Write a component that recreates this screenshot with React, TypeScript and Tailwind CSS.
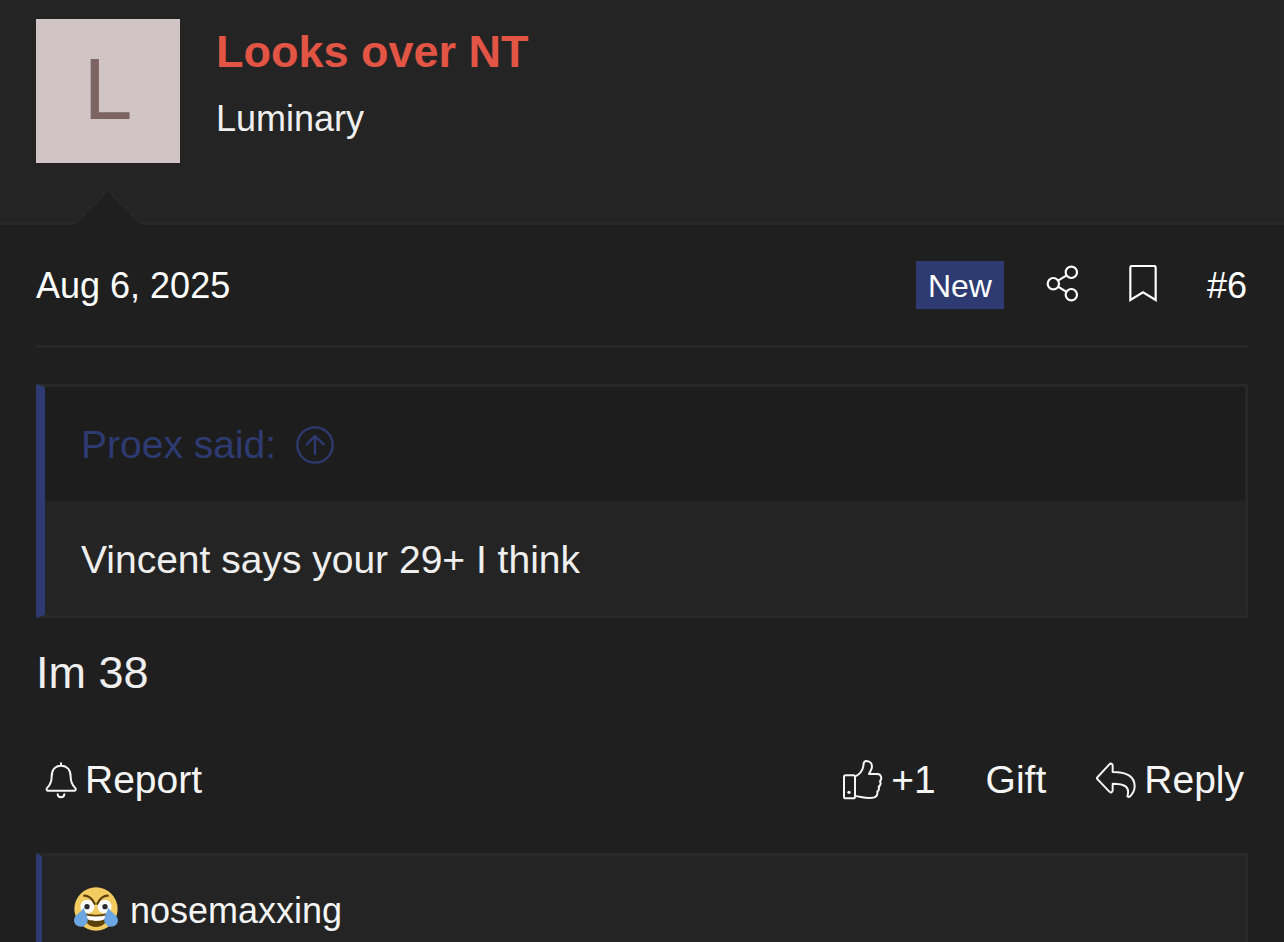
import React from "react";

function ShareIcon() {
  return (
    <svg viewBox="436 75 99 111" className="h-[37px] w-[33px]" fill="none" stroke="currentColor" strokeWidth="6.5" aria-hidden="true">
      <circle cx="458" cy="131" r="17" />
      <circle cx="512" cy="97" r="17" />
      <circle cx="512" cy="164" r="17" />
      <path d="M472 122 498 106M472 140 498 156" />
    </svg>
  );
}

function BookmarkIcon() {
  return (
    <svg viewBox="686 75 84 111" className="h-[37px] w-[28px]" fill="none" stroke="currentColor" strokeWidth="6.5" aria-hidden="true">
      <path d="M690 180V83q0-5 5-5h66q5 0 5 5v97l-38-23z" />
    </svg>
  );
}

function JumpIcon() {
  return (
    <svg viewBox="829 166 114 114" className="size-[38px]" fill="none" stroke="currentColor" strokeWidth="7" strokeLinecap="round" strokeLinejoin="round" aria-hidden="true">
      <circle cx="886" cy="223" r="53" />
      <path d="M886 250V197M861 221l25-25 26 25" />
    </svg>
  );
}

function BellIcon() {
  return (
    <svg viewBox="76 64 96 111" className="h-[37px] w-[32px]" fill="none" stroke="currentColor" strokeWidth="6" strokeLinecap="round" aria-hidden="true">
      <path d="M124 68v6M124 75C106 75 96 88 96 108c0 16-3 23-13 33-4 5-2 9 3 9h77c5 0 7-4 3-9-10-10-13-17-13-33 0-20-11-33-29-33zM114 161c2 12 18 12 20 0" />
    </svg>
  );
}

function ThumbIcon() {
  return (
    <svg viewBox="66 57 120 120" className="size-10" fill="none" stroke="currentColor" strokeWidth="6" strokeLinejoin="round" aria-hidden="true">
      <rect x="69" y="103" width="33" height="69" rx="5" />
      <circle cx="84" cy="154" r="5" fill="currentColor" stroke="none" />
      <path d="M102 107c10-5 22-16 25-31 0-12 3-16 9-16 9 0 17 6 17 17 0 8-7 16-9 22h25c12 0 15 15 8 21 3 7 1 14-4 17 2 6 0 12-4 15 1 6-1 12-5 15-4 4-12 4-18 4-20 0-26-4-44-6" />
    </svg>
  );
}

function ReplyIcon() {
  return (
    <svg viewBox="827 62 120 114" className="h-[38px] w-10" fill="none" stroke="currentColor" strokeWidth="6" strokeLinejoin="round" aria-hidden="true">
      <path d="M832 110 867 72c4-4 10-2 10 4v19c44 0 66 13 66 43 0 14-7 24-15 31-4 2-8 0-6-5 6-24-8-34-45-34v20c0 6-6 8-10 4l-35-37c-3-3-3-4 0-7z" />
    </svg>
  );
}

function LaughCryFace() {
  return (
    <svg viewBox="162 140 132 132" className="size-11" role="img" aria-label="Laughing">
      <circle cx="228" cy="206" r="65" fill="#f2cb61" />
      <circle cx="202" cy="199" r="21" fill="#fff" />
      <circle cx="254" cy="199" r="21" fill="#fff" />
      <circle cx="201" cy="199" r="8" fill="#2b2b30" />
      <circle cx="255" cy="199" r="8" fill="#2b2b30" />
      <path d="M193 166c15 0 24 10 31 24M263 166c-15 0-24 10-31 24" fill="none" stroke="#5f430e" strokeWidth="7" strokeLinecap="round" />
      <path d="M193 219q35 8 70 0c2 26-14 41-35 41s-37-15-35-41z" fill="#5a4108" />
      <path d="M196 225q32 7 64 0c-2 13-14 17-32 17s-30-4-32-17z" fill="#fff" />
      <path d="M191 203c5 14 12 24 12 36 0 12-9 20-20 20s-21-7-21-19c0-16 19-21 29-37zM265 203c-5 14-12 24-12 36 0 12 9 20 20 20s21-7 21-19c0-16-19-21-29-37z" fill="#6ba6e2" />
    </svg>
  );
}

export default function App() {
  return (
    <article className="flex min-h-screen flex-col bg-[#1f1f1f] font-['Liberation_Sans',Arial,sans-serif] text-[#f5f5f5]">
      <header className="relative flex gap-9 border-b-3 border-[#282828] bg-[#242424] px-9 pt-[19px] pb-[59px]">
        <a href="#profile" className="flex size-36 items-center justify-center bg-[#d0c4c4] pb-1 text-[88px] leading-none text-[#7e6363]">
          L
        </a>
        <div className="flex flex-col gap-[18px] pt-[6px]">
          <h1 className="text-[45px] leading-[54px] font-bold text-[#e25444]">
            <a href="#profile">Looks over NT</a>
          </h1>
          <p className="text-[36px] leading-[44px] text-[#efefef]">Luminary</p>
        </div>
        <svg viewBox="0 0 68 36" className="absolute -bottom-[3px] left-[74px] h-9 w-[68px]" aria-hidden="true">
          <path d="M0 36 34 2l34 34z" fill="#1f1f1f" />
          <path d="M0 34.500 34 1l34 33.500" fill="none" stroke="#282828" strokeWidth="2" />
        </svg>
      </header>

      <div className="mx-9 flex h-[123px] items-center justify-between border-b-3 border-[#282828] text-[36px] leading-[44px] text-white">
        <a href="#post-6" className="pt-[2px]">
          <time dateTime="2025-08-06">Aug 6, 2025</time>
        </a>
        <div className="flex items-center pr-px">
          <span className="mr-[42px] bg-[#2d3b72] px-3 pt-[2px] text-[32px] leading-[46px]">New</span>
          <button type="button" aria-label="Share" className="mr-[50px] pb-1">
            <ShareIcon />
          </button>
          <button type="button" aria-label="Bookmark" className="mr-[50px] pb-1">
            <BookmarkIcon />
          </button>
          <a href="#post-6" className="pt-[2px]">
            #6
          </a>
        </div>
      </div>

      <blockquote className="mx-9 mt-9 border-3 border-l-9 border-[#282828] border-l-[#2d3b72] text-[39px] leading-[54px]">
        <a href="#quoted" className="flex items-center gap-5 bg-[#1d1d1d] px-9 pt-[31px] pb-[29px] text-[#2d3b72]">
          Proex said:
          <JumpIcon />
        </a>
        <p className="bg-[#242424] px-9 pt-[32px] pb-[28px] text-[#efefef]">Vincent says your 29+ I think</p>
      </blockquote>

      <p className="mx-9 mt-6 text-[45px] leading-[62px] text-[#efefef]">Im 38</p>

      <div className="mx-9 mt-[49px] flex items-center justify-between pr-1 pl-[9px] text-[39px] leading-[54px]">
        <button type="button" className="flex items-center gap-2">
          <BellIcon />
          Report
        </button>
        <div className="flex items-center gap-[50px]">
          <button type="button" className="flex items-center gap-2">
            <ThumbIcon />
            +1
          </button>
          <button type="button">Gift</button>
          <button type="button" className="flex items-center gap-2">
            <ReplyIcon />
            Reply
          </button>
        </div>
      </div>

      <div className="mx-9 mt-[46px] flex grow items-start gap-3 border-3 border-b-0 border-l-6 border-[#282828] border-l-[#2d3b72] bg-[#242424] px-8 pt-[31px] text-[36px] leading-[44px]">
        <LaughCryFace />
        <a href="#reactions" className="pt-[2px]">
          nosemaxxing
        </a>
      </div>
    </article>
  );
}
